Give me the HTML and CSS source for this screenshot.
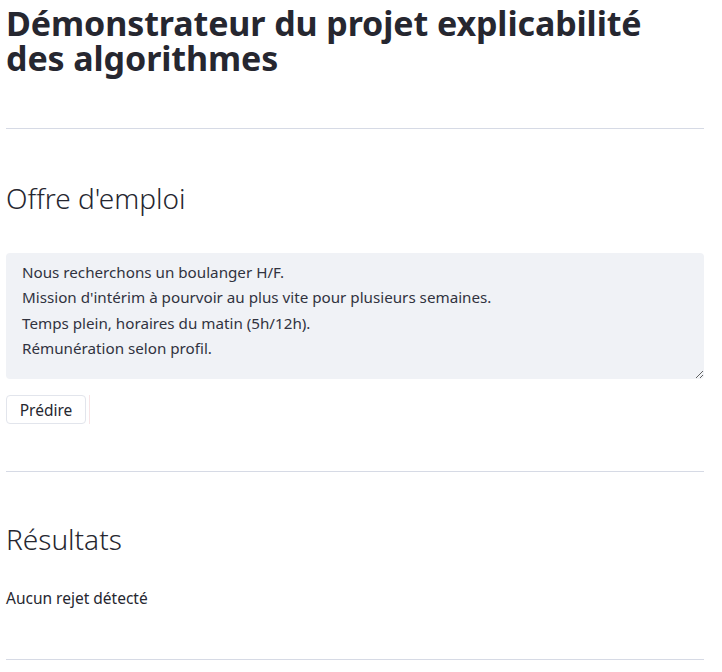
FILE: index.html
```html
<!DOCTYPE html>
<html lang="fr">
<head>
<meta charset="utf-8">
<title>Démonstrateur</title>
<link rel="stylesheet" href="styles.css">
</head>
<body>
<main class="page">
  <h1 class="title">Démonstrateur du projet explicabilité des algorithmes</h1>
  <hr class="rule rule-top">
  <h2 class="section-title section-offre">Offre d'emploi</h2>
  <textarea class="offer" rows="4">Nous recherchons un boulanger H/F.
Mission d'intérim à pourvoir au plus vite pour plusieurs semaines.
Temps plein, horaires du matin (5h/12h).
Rémunération selon profil.</textarea>
  <div class="actions">
    <button class="btn" type="button">Prédire</button>
    <span class="btn-edge"></span>
  </div>
  <hr class="rule rule-mid">
  <h2 class="section-title section-res">Résultats</h2>
  <p class="result">Aucun rejet détecté</p>
  <hr class="rule rule-bottom">
</main>
</body>
</html>
```
FILE: styles.css
```css
* { box-sizing: border-box; }
html, body { margin: 0; padding: 0; background: #ffffff; }
body {
  font-family: "Noto Sans", "Open Sans", sans-serif;
  color: #262730;
  overflow: hidden;
}
.page {
  width: 698px;
  margin-left: 6px;
  padding-top: 6px;
}
.title {
  margin: 0;
  font-size: 34px;
  font-weight: 700;
  line-height: 35px;
  letter-spacing: -0.1px;
  color: #262730;
  width: 660px;
}
.rule {
  border: 0;
  height: 1px;
  background: #d6dae5;
  margin: 0;
}
.rule-top { margin-top: 52px; }
.section-title {
  margin: 0;
  font-size: 28px;
  font-weight: 300;
  line-height: 40px;
  color: #262730;
}
.section-offre { margin-top: 49px; }
.offer {
  display: block;
  width: 698px;
  height: 126px;
  margin-top: 35px;
  padding: 7px 16px 8px;
  border: 0;
  border-radius: 4px;
  background: #f0f2f6;
  color: #31333f;
  font-family: "Noto Sans", "Open Sans", sans-serif;
  font-size: 15.2px;
  line-height: 25.4px;
  resize: vertical;
  outline: none;
}
.actions {
  display: flex;
  align-items: stretch;
  margin-top: 16px;
  height: 29px;
}
.btn {
  width: 80px;
  height: 29px;
  padding: 0;
  background: #ffffff;
  border: 1px solid #e2e5ec;
  border-radius: 4px;
  font-family: "Noto Sans", "Open Sans", sans-serif;
  font-size: 15.5px;
  color: #262730;
}
.btn-edge {
  width: 1px;
  margin-left: 3px;
  background: #f7e4e6;
}
.rule-mid { margin-top: 47px; }
.section-res { margin-top: 47px; }
.result {
  margin: 27px 0 0;
  font-size: 15.5px;
  line-height: 24px;
  color: #262730;
}
.rule-bottom { margin-top: 49px; }
```
